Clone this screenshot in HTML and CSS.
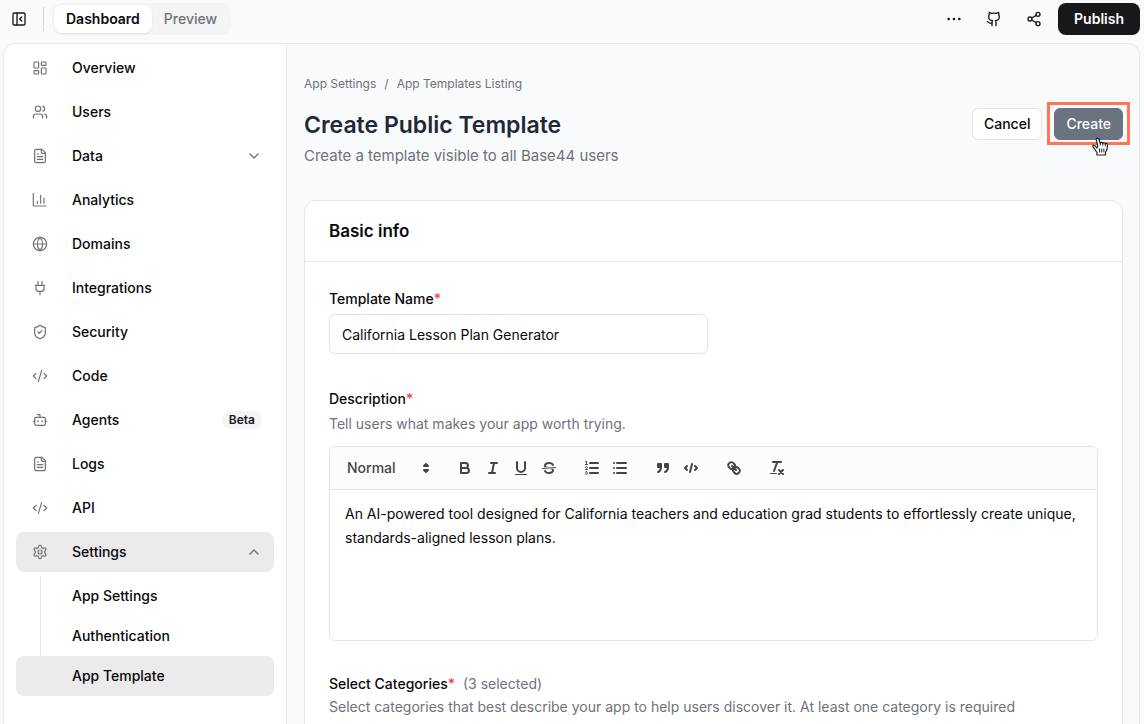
FILE: index.html
```html
<!DOCTYPE html>
<html lang="en">
<head>
<meta charset="utf-8">
<title>Create Public Template</title>
<link rel="stylesheet" href="styles.css">
</head>
<body>
<svg class="sprite" aria-hidden="true">
  <symbol id="file" viewBox="0 0 24 24"><path d="M15 2H6a2 2 0 0 0-2 2v16a2 2 0 0 0 2 2h12a2 2 0 0 0 2-2V7Z"/><path d="M14 2v4a2 2 0 0 0 2 2h4M10 9H8M16 13H8M16 17H8"/></symbol>
  <symbol id="code" viewBox="0 0 24 24"><path d="m18 16 4-4-4-4M6 8l-4 4 4 4M14.500 4l-5 16"/></symbol>
</svg>
<div class="app">
  <header class="topbar">
    <button class="icon-btn panel-btn" aria-label="Collapse sidebar"><svg class="icon strong" viewBox="0 0 24 24"><rect x="3" y="3" width="18" height="18" rx="2"/><path d="M9 3v18M16 15l-3-3 3-3"/></svg></button>
    <span class="divider"></span>
    <div class="switch">
      <button class="switch-item active">Dashboard</button>
      <button class="switch-item">Preview</button>
    </div>
    <div class="top-actions">
      <button class="icon-btn" aria-label="More"><svg class="icon strong" viewBox="0 0 24 24"><circle cx="12" cy="12" r="1"/><circle cx="20" cy="12" r="1"/><circle cx="4" cy="12" r="1"/></svg></button>
      <button class="icon-btn" aria-label="GitHub"><svg class="icon strong" viewBox="0 0 24 24"><path d="M15 22v-4a4.800 4.800 0 0 0-1-3.500c3 0 6-2 6-5.500.08-1.250-.27-2.480-1-3.500.28-1.150.28-2.350 0-3.500 0 0-1 0-3 1.500-2.640-.5-5.360-.5-8 0C6 2 5 2 5 2c-.3 1.150-.3 2.350 0 3.500A5.403 5.403 0 0 0 4 9c0 3.500 3 5.500 6 5.500-.39.490-.68 1.050-.85 1.650-.17.600-.22 1.230-.15 1.850v4"/><path d="M9 18c-4.510 2-5-2-7-2"/></svg></button>
      <button class="icon-btn" aria-label="Share"><svg class="icon strong" viewBox="0 0 24 24"><circle cx="18" cy="5" r="3"/><circle cx="6" cy="12" r="3"/><circle cx="18" cy="19" r="3"/><path d="m8.590 13.510 6.830 3.980M15.410 6.510l-6.820 3.980"/></svg></button>
      <button class="publish">Publish</button>
    </div>
  </header>
  <div class="shell">
    <nav class="sidebar" aria-label="Dashboard">
      <a class="nav-item" href="#"><svg class="icon" viewBox="0 0 24 24"><rect x="3" y="3" width="7" height="9" rx="1"/><rect x="14" y="3" width="7" height="5" rx="1"/><rect x="14" y="12" width="7" height="9" rx="1"/><rect x="3" y="16" width="7" height="5" rx="1"/></svg>Overview</a>
      <a class="nav-item" href="#"><svg class="icon" viewBox="0 0 24 24"><path d="M16 21v-2a4 4 0 0 0-4-4H6a4 4 0 0 0-4 4v2"/><circle cx="9" cy="7" r="4"/><path d="M22 21v-2a4 4 0 0 0-3-3.870M16 3.130a4 4 0 0 1 0 7.750"/></svg>Users</a>
      <a class="nav-item" href="#"><svg class="icon"><use href="#file"/></svg>Data<svg class="icon chevron" viewBox="0 0 24 24"><path d="m6 9 6 6 6-6"/></svg></a>
      <a class="nav-item" href="#"><svg class="icon" viewBox="0 0 24 24"><path d="M2 2v18a1 1 0 0 0 1 1h18M18 17V9M13 17V5M8 17v-3"/></svg>Analytics</a>
      <a class="nav-item" href="#"><svg class="icon" viewBox="0 0 24 24"><circle cx="12" cy="12" r="10"/><path d="M12 2a14.500 14.500 0 0 0 0 20 14.500 14.500 0 0 0 0-20M2 12h20"/></svg>Domains</a>
      <a class="nav-item" href="#"><svg class="icon" viewBox="0 0 24 24"><path d="M12 22v-5M9 8V2M15 8V2M19 8H5M18 8v5a4 4 0 0 1-4 4h-4a4 4 0 0 1-4-4V8"/></svg>Integrations</a>
      <a class="nav-item" href="#"><svg class="icon" viewBox="0 0 24 24"><path d="M20 13c0 5-3.500 7.500-7.660 8.950a1 1 0 0 1-.67-.01C7.500 20.500 4 18 4 13V6a1 1 0 0 1 1-1c2 0 4.500-1.200 6.240-2.720a1.170 1.170 0 0 1 1.520 0C14.510 3.810 17 5 19 5a1 1 0 0 1 1 1z"/><path d="m9 12 2 2 4-4"/></svg>Security</a>
      <a class="nav-item" href="#"><svg class="icon"><use href="#code"/></svg>Code</a>
      <a class="nav-item" href="#"><svg class="icon" viewBox="0 0 24 24"><path d="M12 8V4H8"/><rect x="4" y="8" width="16" height="12" rx="2"/><path d="M2 14h2M20 14h2M15 13v2M9 13v2"/></svg>Agents<span class="badge">Beta</span></a>
      <a class="nav-item" href="#"><svg class="icon"><use href="#file"/></svg>Logs</a>
      <a class="nav-item" href="#"><svg class="icon"><use href="#code"/></svg>API</a>
      <a class="nav-item selected" href="#"><svg class="icon" viewBox="0 0 24 24"><path d="M12.220 2h-.44a2 2 0 0 0-2 2v.18a2 2 0 0 1-1 1.730l-.43.250a2 2 0 0 1-2 0l-.15-.08a2 2 0 0 0-2.730.730l-.22.380a2 2 0 0 0 .73 2.730l.15.100a2 2 0 0 1 1 1.720v.51a2 2 0 0 1-1 1.740l-.15.090a2 2 0 0 0-.73 2.730l.22.380a2 2 0 0 0 2.730.730l.15-.08a2 2 0 0 1 2 0l.43.250a2 2 0 0 1 1 1.730V20a2 2 0 0 0 2 2h.44a2 2 0 0 0 2-2v-.18a2 2 0 0 1 1-1.730l.43-.25a2 2 0 0 1 2 0l.15.080a2 2 0 0 0 2.730-.73l.22-.39a2 2 0 0 0-.73-2.730l-.15-.08a2 2 0 0 1-1-1.740v-.5a2 2 0 0 1 1-1.740l.15-.09a2 2 0 0 0 .73-2.730l-.22-.38a2 2 0 0 0-2.730-.73l-.15.080a2 2 0 0 1-2 0l-.43-.25a2 2 0 0 1-1-1.730V4a2 2 0 0 0-2-2z"/><circle cx="12" cy="12" r="3"/></svg>Settings<svg class="icon chevron" viewBox="0 0 24 24"><path d="m6 15 6-6 6 6"/></svg></a>
      <div class="subnav">
        <a class="sub-item" href="#">App Settings</a>
        <a class="sub-item" href="#">Authentication</a>
        <a class="sub-item selected" href="#">App Template</a>
      </div>
    </nav>
    <main class="content">
      <div class="crumbs"><a href="#">App Settings</a><span>/</span><a href="#">App Templates Listing</a></div>
      <div class="page-head">
        <div>
          <h1>Create Public Template</h1>
          <p class="lead">Create a template visible to all Base44 users</p>
        </div>
        <div class="head-actions">
          <button class="btn">Cancel</button>
          <div class="spotlight">
            <button class="btn primary">Create</button>
            <svg class="pointer" viewBox="0 0 17 19" aria-hidden="true"><path d="M5 11 2.700 8.600C1.300 7.500.2 9 1.200 10.200L5 15.500V18h8.500v-2.500c1.600-2 2-3.500 2-7.500 0-2-2-2-2.200-.7 0-2-2.300-2-2.500-.6-.1-1.600-2.300-1.700-2.500-.2L6.900 2.200C6.300.4 3.900.8 4.300 2.900L5.800 9.500Z" fill="#fff" stroke="#222" stroke-width="1.200" stroke-linejoin="round"/><path d="M8.300 6.500v2M10.800 6.700v2M13.300 7.300v2M7.500 11.500v4M9.700 11.500v4M11.900 11.500v4" stroke="#222" fill="none"/></svg>
          </div>
        </div>
      </div>
      <section class="card">
        <h2>Basic info</h2>
        <form class="form">
          <div class="field half">
            <label for="name">Template Name<span class="req">*</span></label>
            <input id="name" type="text" value="California Lesson Plan Generator">
          </div>
          <div class="field">
            <label for="desc">Description<span class="req">*</span></label>
            <p class="hint">Tell users what makes your app worth trying.</p>
            <div class="editor">
              <div class="toolbar">
                <div class="picker">
                  <select aria-label="Text style"><option>Normal</option></select>
                  <svg class="q" viewBox="0 0 18 18"><path class="f" d="m7 11 2 2 2-2ZM7 7l2-2 2 2Z"/></svg>
                </div>
                <div class="tools">
                  <button type="button" aria-label="Bold"><svg class="q" viewBox="0 0 18 18"><path d="M5 4h4.500a2.500 2.500 0 0 1 0 5H5ZM5 9h5.500a2.500 2.500 0 0 1 0 5H5Z"/></svg></button>
                  <button type="button" aria-label="Italic"><svg class="q" viewBox="0 0 18 18"><path d="M7 4h6M5 14h6M8 14l2-10"/></svg></button>
                  <button type="button" aria-label="Underline"><svg class="q" viewBox="0 0 18 18"><path d="M5 3v6a4 4 0 0 0 8 0V3"/><rect class="s" x="3" y="15" width="12" height="1" rx=".5"/></svg></button>
                  <button type="button" aria-label="Strikethrough"><svg class="q" viewBox="0 0 18 18"><path class="t" d="M15.500 8.500l-13 1"/><path class="s" d="M9.007 8C6.542 7.791 6 7.519 6 6.500 6 5.792 7.283 5 9 5c1.571 0 2.765.679 2.969 1.309a1 1 0 0 0 1.900-.617C13.356 4.106 11.354 3 9 3 6.200 3 4 4.538 4 6.500a3.200 3.200 0 0 0 .5 1.843ZM8.984 10C11.457 10.208 12 10.479 12 11.500c0 .708-1.283 1.500-3 1.500-1.571 0-2.765-.679-2.969-1.309a1 1 0 1 0-1.900.617C4.644 13.894 6.646 15 9 15c2.800 0 5-1.538 5-3.500a3.200 3.200 0 0 0-.5-1.843Z"/></svg></button>
                </div>
                <div class="tools">
                  <button type="button" aria-label="Numbered list"><svg class="q" viewBox="0 0 18 18"><path d="M7 4h8M7 9h8M7 14h8"/><path class="t" d="M2.500 5.500h2M2.500 2.800l1-.5v3M4.500 10.500h-2c0-.234 1.850-1.076 1.850-2.234A.959.959 0 0 0 2.500 8.156M2.500 14.846a.959.959 0 0 0 1.850-.109.700.700 0 0 0-.6-.737.688.688 0 0 0 .6-.736.959.959 0 0 0-1.850-.109"/></svg></button>
                  <button type="button" aria-label="Bulleted list"><svg class="q" viewBox="0 0 18 18"><path d="M6 4h9M6 9h9M6 14h9M3 4h.01M3 9h.01M3 14h.01"/></svg></button>
                </div>
                <div class="tools">
                  <button type="button" aria-label="Quote"><svg class="q" viewBox="0 0 18 18"><path class="f" d="M4 5h3v3H4ZM11 5h3v3h-3Z"/><path class="f" d="M7 8c0 4.031-3 5-3 5M14 8c0 4.031-3 5-3 5"/></svg></button>
                  <button type="button" aria-label="Code block"><svg class="q" viewBox="0 0 18 18"><path d="M5 7 3 9l2 2M13 7l2 2-2 2M10 5 8 13"/></svg></button>
                </div>
                <div class="tools">
                  <button type="button" aria-label="Link"><svg class="q" viewBox="0 0 18 18"><path d="m7 7 4 4M8.900 4.577a3.476 3.476 0 0 1 .36 4.679A3.476 3.476 0 0 1 4.577 8.900C3.185 7.500 2.035 6.400 4.217 4.217S7.500 3.185 8.900 4.577ZM13.423 9.100a3.476 3.476 0 0 0-4.679-.36 3.476 3.476 0 0 0 .36 4.679c1.392 1.392 2.500 2.542 4.679.36S14.815 10.500 13.423 9.100Z"/></svg></button>
                </div>
                <div class="tools">
                  <button type="button" aria-label="Clear formatting"><svg class="q" viewBox="0 0 18 18"><path d="M5 3h8M6 12 9.350 3M11 11l4 4M15 11l-4 4"/><rect class="s" x="2" y="14" width="7" height="1" rx=".5"/></svg></button>
                </div>
              </div>
              <textarea id="desc" spellcheck="false">An AI-powered tool designed for California teachers and education grad students to effortlessly create unique, standards-aligned lesson plans.</textarea>
            </div>
          </div>
          <div class="field">
            <div class="label">Select Categories<span class="req">*</span><span class="count">(3 selected)</span></div>
            <p class="hint">Select categories that best describe your app to help users discover it. At least one category is required</p>
          </div>
        </form>
      </section>
    </main>
  </div>
</div>
</body>
</html>
```

FILE: styles.css
```css
* { box-sizing: border-box; }
body { margin: 0; background: #f9fafc; color: #09090b; font: 14px/20px Inter, "Liberation Sans", sans-serif; }
h1, h2, p { margin: 0; }
button, input, select, textarea { font: inherit; color: inherit; }
button { padding: 0; border: 0; background: none; }
a { color: inherit; text-decoration: none; }
.sprite { display: none; }
.app { display: flex; flex-direction: column; height: 100vh; overflow: hidden; }

.icon { width: 16px; height: 16px; flex: none; fill: none; stroke: #71717a; stroke-width: 1.8; stroke-linecap: round; stroke-linejoin: round; }
.icon.strong { stroke: #18181b; stroke-width: 2; }

.topbar { display: flex; align-items: center; flex: none; padding: 3px 4px 0 3px; height: 35px; }
.icon-btn { display: grid; place-items: center; width: 32px; height: 32px; }
.divider { width: 1px; height: 24px; margin: 0 8px; background: #d4d4d8; }
.switch { display: flex; padding: 2px; border-radius: 10px; background: #f4f4f5; }
.switch-item { height: 28px; padding: 0 12px; border-radius: 8px; color: #71717a; font-weight: 500; }
.switch-item.active { background: #fff; color: #09090b; font-weight: 600; box-shadow: 0 1px 2px rgba(0, 0, 0, .08); }
.top-actions { display: flex; align-items: center; gap: 8px; margin-left: auto; }
.publish { height: 32px; padding: 0 16px; border-radius: 8px; background: #18181b; color: #fff; font-weight: 600; }

.shell { display: flex; flex: 1; min-height: 0; margin: 8px 4px 0 3px; border: 1px solid #e2e8f0; border-bottom: 0; border-radius: 12px 12px 0 0; overflow: hidden; }
.sidebar { display: flex; flex-direction: column; gap: 4px; flex: none; width: 283px; padding: 4px 12px; background: #fff; border-right: 1px solid #e2e8f0; font-weight: 500; }
.nav-item { display: flex; align-items: center; gap: 24px; height: 40px; flex: none; padding: 0 12px 0 16px; border-radius: 8px; }
.selected { background: #ebebeb; }
.chevron { margin-left: auto; stroke-width: 2; }
.badge { margin-left: auto; padding: 1px 7px; border-radius: 9px; background: #f4f4f5; font-size: 12px; line-height: 16px; font-weight: 600; color: #18181b; }
.subnav { display: flex; flex-direction: column; background: linear-gradient(#e4e4e7, #e4e4e7) 24px 0 / 1px 100% no-repeat; }
.sub-item { height: 40px; padding: 10px 56px; border-radius: 8px; }

.content { flex: 1; min-width: 0; padding: 30px 16px 0 17px; overflow: hidden; }
.crumbs { display: flex; gap: 8px; color: #71717a; font-size: 12px; }
.page-head { display: flex; justify-content: space-between; margin-top: 14px; }
h1 { font-size: 23px; line-height: 34px; font-weight: 600; color: #1f2937; }
.lead { margin-top: 2px; font-size: 15px; line-height: 24px; color: #71717a; }
.head-actions { display: flex; gap: 12px; }
.btn { height: 32px; padding: 0 11px; border: 1px solid #e4e4e7; border-radius: 6px; background: #fff; font-weight: 500; }
.btn.primary { border-color: #6b7280; background: #6b7280; color: #fff; }
.spotlight { position: relative; height: 32px; }
.spotlight::after { content: ""; position: absolute; inset: -6px -7px -5px; border: 3px solid #ff7657; }
.pointer { position: absolute; z-index: 1; left: 38px; top: 29px; width: 17px; height: 19px; }

.card { margin-top: 32px; border: 1px solid #e2e8f0; border-radius: 12px; background: #fff; }
h2 { padding: 16px 24px; border-bottom: 1px solid #e2e8f0; font-size: 17px; line-height: 28px; font-weight: 600; }
.form { display: grid; gap: 32px; padding: 26px 24px; }
.field { display: flex; flex-direction: column; }
.half { width: calc(50% - 6px); margin-bottom: 2px; }
label, .label { font-weight: 500; line-height: 22px; }
.req { color: #ef4444; }
.count { margin-left: 8px; font-weight: 400; color: #71717a; }
.hint { line-height: 24px; color: #71717a; }
label + .hint { margin-top: 2px; }
input { height: 40px; margin-top: 4px; padding: 0 12px; border: 1px solid #e4e4e7; border-radius: 6px; background: #fff; }
.editor { display: flex; flex-direction: column; margin-top: 10px; border: 1px solid #e4e4e7; border-radius: 6px; overflow: hidden; }
.toolbar { display: flex; gap: 15px; padding: 8px; border-bottom: 1px solid #e4e4e7; background: #fcfcfc; }
.tools { display: flex; }
.tools button { display: grid; place-items: center; width: 28px; height: 26px; }
.picker { position: relative; width: 98px; }
.picker select { width: 100%; height: 26px; padding: 0 9px; border: 0; appearance: none; background: none; color: #444; font-weight: 500; }
.picker .q { position: absolute; right: 1px; top: 4px; pointer-events: none; }
.q { width: 18px; height: 18px; fill: none; stroke: #444; stroke-width: 2; stroke-linecap: round; stroke-linejoin: round; }
.q .f { fill: #444; }
.q .s { fill: #444; stroke: none; }
.q .t { stroke-width: 1; }
textarea { height: 150px; padding: 12px 15px; border: 0; resize: none; outline: 0; background: #fff; line-height: 24px; }
```
